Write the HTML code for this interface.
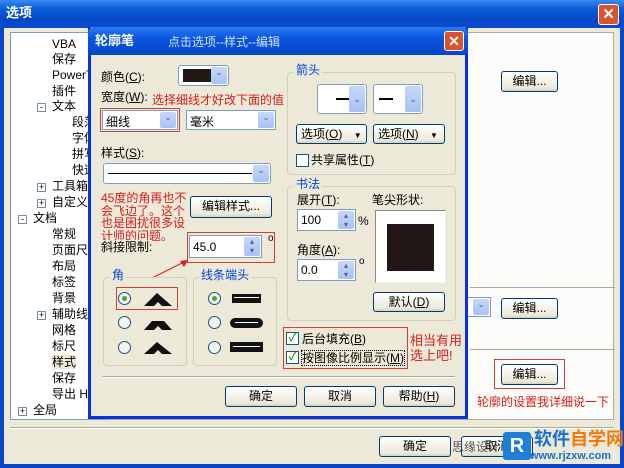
<!DOCTYPE html>
<html><head><meta charset="utf-8"><style>
*{margin:0;padding:0;box-sizing:border-box}
body{width:624px;height:468px;overflow:hidden;background:#ece9d8;font-family:"Liberation Sans","Noto Sans CJK SC",sans-serif;font-size:12px;color:#000;position:relative}
.a{position:absolute;white-space:nowrap;line-height:14px}
.btn{position:absolute;border:1px solid #003c74;border-radius:3px;background:linear-gradient(#fff,#ece9d8 85%,#d6d0c0);text-align:center;font-size:12px;line-height:18px}
.sel{position:absolute;background:#fff;border:1px solid #7f9db9;}
.dd{position:absolute;right:1px;top:1px;bottom:1px;width:16px;background:linear-gradient(#c6d7fb,#a9c2f5);border-radius:2px;color:#4d6185;font-size:9px;text-align:center}
.red{color:#d4201a}
.rb{position:absolute;border:1px solid #c8423b}
.grp{position:absolute;border:1px solid #d0d0bf;border-radius:4px}
.gt{position:absolute;background:#ece9d8;color:#0046d5;padding:0 2px;line-height:14px}
.rad{position:absolute;width:13px;height:13px;border-radius:50%;border:1px solid #1c5180;background:#f4f4ee}
.rad.on::after{content:"";position:absolute;left:3px;top:3px;width:5px;height:5px;border-radius:50%;background:#3fae3f}
.cb{position:absolute;width:13px;height:13px;border:1px solid #1c5180;background:#fff;color:#21a121;font-size:11px;line-height:11px;text-align:center;font-weight:bold}
.t{position:absolute;left:0;white-space:nowrap;line-height:14px}
.pl{position:absolute;width:9px;height:9px;border:1px solid #7a8aa0;background:#fff;font-size:9px;line-height:7px;text-align:center;color:#000}
</style></head><body>
<div class="a" style="left:0;top:0;width:624px;height:28px;background:linear-gradient(#3d8af7,#0a5fd8 30%,#0846c6 70%,#0a4bd0);"></div>
<div class="a" style="left:6px;top:6px;color:#fff;font-size:13px;font-weight:bold">选项</div>
<div class="a" style="left:598px;top:4px;width:21px;height:21px;border:1px solid #fff;border-radius:3px;background:#d9532c;color:#fff;text-align:center;font-size:15px;line-height:19px;font-weight:bold">✕</div>
<div class="a" style="left:0;top:28px;width:4px;height:440px;background:#0846c6"></div>
<div class="a" style="left:620px;top:28px;width:4px;height:440px;background:#0846c6"></div>
<div class="a" style="left:0;top:464px;width:624px;height:4px;background:#0846c6"></div>
<div class="a" style="left:10px;top:32px;width:96px;height:388px;background:#fff;border:1px solid #7f9db9"></div>
<div class="a" style="left:106px;top:32px;width:508px;height:388px;background:#fbfbf9;border:1px solid #aaa"></div>
<div class="a" style="left:10px;top:427px;width:604px;height:1px;background:#aca899"></div>
<div class="a" style="left:10px;top:428px;width:604px;height:1px;background:#fff"></div>
<div style="position:absolute;left:0;top:0;font-size:12px">
<div class="t" style="left:52px;top:37px">VBA</div>
<div class="t" style="left:52px;top:52px">保存</div>
<div class="t" style="left:52px;top:68px">PowerT</div>
<div class="t" style="left:52px;top:84px">插件</div>
<div class="pl" style="left:37px;top:103px">-</div><div class="t" style="left:52px;top:99px">文本</div>
<div class="t" style="left:72px;top:115px">段落</div>
<div class="t" style="left:72px;top:131px">字体</div>
<div class="t" style="left:72px;top:147px">拼写</div>
<div class="t" style="left:72px;top:163px">快速</div>
<div class="pl" style="left:37px;top:183px">+</div><div class="t" style="left:52px;top:179px">工具箱</div>
<div class="pl" style="left:37px;top:199px">+</div><div class="t" style="left:52px;top:195px">自定义</div>
<div class="pl" style="left:18px;top:215px">-</div><div class="t" style="left:33px;top:211px">文档</div>
<div class="t" style="left:52px;top:227px">常规</div>
<div class="t" style="left:52px;top:243px">页面尺</div>
<div class="t" style="left:52px;top:259px">布局</div>
<div class="t" style="left:52px;top:275px">标签</div>
<div class="t" style="left:52px;top:291px">背景</div>
<div class="pl" style="left:37px;top:311px">+</div><div class="t" style="left:52px;top:307px">辅助线</div>
<div class="t" style="left:52px;top:323px">网格</div>
<div class="t" style="left:52px;top:339px">标尺</div>
<div class="t" style="left:52px;top:355px;background:#ece9d8">样式</div>
<div class="t" style="left:52px;top:371px">保存</div>
<div class="t" style="left:52px;top:387px">导出 H</div>
<div class="pl" style="left:18px;top:407px">+</div><div class="t" style="left:33px;top:403px">全局</div>
</div>
<div class="btn" style="left:501px;top:71px;width:57px;height:21px">编辑...</div>
<div class="a" style="left:470px;top:287px;width:145px;height:1px;background:#aca899"></div>
<div class="sel" style="left:466px;top:297px;width:25px;height:20px"><div class="dd">⌄</div></div>
<div class="btn" style="left:501px;top:298px;width:57px;height:21px">编辑...</div>
<div class="a" style="left:470px;top:349px;width:145px;height:1px;background:#aca899"></div>
<div class="rb" style="left:494px;top:359px;width:71px;height:30px"></div>
<div class="btn" style="left:501px;top:364px;width:57px;height:21px">编辑...</div>
<div class="a red" style="left:477px;top:395px;font-size:12px">轮廓的设置我详细说一下</div>
<div class="btn" style="left:379px;top:436px;width:72px;height:21px">确定</div>
<div class="btn" style="left:461px;top:436px;width:72px;height:21px">取消</div>
<div class="a" style="left:452px;top:440px;color:#555">思缘设计</div>
<div class="a" style="left:503px;top:432px;width:28px;height:28px;background:#1f7fd8;border-radius:3px;color:#fff;font-weight:bold;font-size:20px;text-align:center;line-height:28px">R</div>
<div class="a" style="left:534px;top:430px;color:#1a6fd0;font-weight:bold;font-size:18px;line-height:19px">软件<span style="color:#f07a10">自学网</span></div>
<div class="a" style="left:530px;top:451px;color:#1a6fd0;font-weight:bold;font-size:11px;line-height:10px">www.rjzxw.com</div>
<div class="a" style="left:88px;top:27px;width:380px;height:392px;background:#ece9d8;border:3px solid #0831d9;border-top:0"></div>
<div class="a" style="left:88px;top:27px;width:380px;height:28px;background:linear-gradient(#2b7af0,#0a55e0 40%,#0846c6);border-radius:6px 6px 0 0"></div>
<div class="a" style="left:95px;top:34px;color:#fff;font-weight:bold;font-size:13px">轮廓笔</div>
<div class="a" style="left:168px;top:35px;color:#cfe3ff;font-size:12px">点击选项--样式--编辑</div>
<div class="a" style="left:444px;top:31px;width:20px;height:20px;border:1px solid #fff;border-radius:3px;background:#d9532c;color:#fff;text-align:center;font-size:14px;line-height:18px;font-weight:bold">✕</div>
<div class="a" style="left:101px;top:70px">颜色(<u>C</u>):</div>
<div class="sel" style="left:178px;top:65px;width:51px;height:21px;border-radius:3px"><div style="position:absolute;left:4px;top:3px;width:28px;height:13px;background:#231815"></div><div class="dd">⌄</div></div>
<div class="a" style="left:101px;top:90px">宽度(<u>W</u>):</div>
<div class="a red" style="left:152px;top:93px">选择细线才好改下面的值</div>
<div class="rb" style="left:100px;top:108px;width:80px;height:24px"></div>
<div class="sel" style="left:102px;top:110px;width:76px;height:20px"><span style="position:absolute;left:3px;top:2px">细线</span><div class="dd">⌄</div></div>
<div class="sel" style="left:186px;top:110px;width:90px;height:20px"><span style="position:absolute;left:3px;top:2px">毫米</span><div class="dd">⌄</div></div>
<div class="a" style="left:101px;top:146px">样式(<u>S</u>):</div>
<div class="sel" style="left:103px;top:163px;width:168px;height:21px;border-radius:3px"><div style="position:absolute;left:4px;top:9px;width:144px;height:1px;background:#000"></div><div class="dd">⌄</div></div>
<div class="a red" style="left:101px;top:192px;line-height:12.5px;font-size:12px">45度的角再也不<br>会飞边了。这个<br>也是困扰很多设<br>计师的问题。</div>
<div class="btn" style="left:190px;top:196px;width:82px;height:22px">编辑样式...</div>
<div class="a" style="left:101px;top:240px;background:#ece9d8">斜接限制:</div>
<div class="rb" style="left:187px;top:232px;width:88px;height:31px"></div>
<div class="sel" style="left:189px;top:235px;width:73px;height:23px"><span style="position:absolute;left:3px;top:4px">45.0</span><div class="dd" style="font-size:8px;line-height:9px">▴<br>▾</div></div>
<div class="a" style="left:268px;top:232px;font-size:10px">o</div>
<svg class="a" style="left:150px;top:258px" width="40" height="22"><line x1="2" y1="20" x2="36" y2="3" stroke="#d4201a"/><polygon points="38,2 30,3 34,9" fill="#d4201a"/></svg>
<div class="grp" style="left:103px;top:277px;width:84px;height:89px"></div>
<div class="gt" style="left:110px;top:268px">角</div>
<div class="grp" style="left:193px;top:277px;width:84px;height:89px"></div>
<div class="gt" style="left:199px;top:268px">线条端头</div>
<div class="rb" style="left:116px;top:287px;width:62px;height:23px"></div>
<div class="rad on" style="left:118px;top:292px"></div>
<div class="rad" style="left:118px;top:316px"></div>
<div class="rad" style="left:118px;top:341px"></div>
<svg class="a" style="left:142px;top:290px" width="32" height="70">
<polygon points="2,16 15,3 30,16 20,16 16,12 12,16" fill="#111"/>
<polygon points="2,40 10,31 22,31 30,40 20,40 16,36 12,40" fill="#111"/>
<polygon points="2,64 15,52 30,64 20,64 16,60 12,64" fill="#111"/>
</svg>
<div class="rad on" style="left:208px;top:292px"></div>
<div class="rad" style="left:208px;top:316px"></div>
<div class="rad" style="left:208px;top:341px"></div>
<div class="a" style="left:232px;top:294px;width:29px;height:9px;background:#111;"><div style="position:absolute;left:2px;top:3px;width:25px;height:1px;background:#fff"></div></div>
<div class="a" style="left:230px;top:318px;width:33px;height:10px;background:#111;border-radius:5px"><div style="position:absolute;left:5px;top:4px;width:23px;height:1px;background:#fff"></div></div>
<div class="a" style="left:230px;top:342px;width:33px;height:10px;background:#111;"><div style="position:absolute;left:3px;top:4px;width:27px;height:1px;background:#fff"></div></div>
<div class="grp" style="left:287px;top:72px;width:169px;height:103px"></div>
<div class="gt" style="left:294px;top:63px">箭头</div>
<div class="sel" style="left:317px;top:84px;width:50px;height:30px;border-radius:3px"><div style="position:absolute;left:18px;top:13px;width:14px;height:2px;background:#000"></div><div class="dd" style="line-height:26px">⌄</div></div>
<div class="sel" style="left:373px;top:84px;width:50px;height:30px;border-radius:3px"><div style="position:absolute;left:5px;top:13px;width:14px;height:2px;background:#000"></div><div class="dd" style="line-height:26px">⌄</div></div>
<div class="btn" style="left:296px;top:124px;width:71px;height:20px;text-align:left;padding-left:4px">选项(<u>O</u>) <span style="font-size:8px;margin-left:8px">▼</span></div>
<div class="btn" style="left:373px;top:124px;width:72px;height:20px;text-align:left;padding-left:4px">选项(<u>N</u>) <span style="font-size:8px;margin-left:8px">▼</span></div>
<div class="cb" style="left:296px;top:154px"></div>
<div class="a" style="left:311px;top:153px">共享属性(<u>T</u>)</div>
<div class="grp" style="left:287px;top:186px;width:169px;height:135px"></div>
<div class="gt" style="left:294px;top:177px">书法</div>
<div class="a" style="left:297px;top:193px">展开(<u>T</u>):</div>
<div class="sel" style="left:297px;top:209px;width:59px;height:22px"><span style="position:absolute;left:3px;top:3px">100</span><div class="dd" style="font-size:8px;line-height:9px">▴<br>▾</div></div>
<div class="a" style="left:358px;top:214px">%</div>
<div class="a" style="left:372px;top:193px">笔尖形状:</div>
<div class="a" style="left:375px;top:210px;width:71px;height:73px;background:#fff;border:1px solid #888;border-right-color:#eee;border-bottom-color:#eee"><div style="position:absolute;left:11px;top:13px;width:47px;height:47px;background:#231815"></div></div>
<div class="a" style="left:297px;top:243px">角度(<u>A</u>):</div>
<div class="sel" style="left:297px;top:259px;width:59px;height:22px"><span style="position:absolute;left:3px;top:3px">0.0</span><div class="dd" style="font-size:8px;line-height:9px">▴<br>▾</div></div>
<div class="a" style="left:359px;top:255px;font-size:10px">o</div>
<div class="btn" style="left:373px;top:292px;width:72px;height:20px">默认(<u>D</u>)</div>
<div class="rb" style="left:283px;top:327px;width:125px;height:42px"></div>
<div class="cb" style="left:286px;top:332px">✓</div>
<div class="a" style="left:302px;top:332px">后台填充(<u>B</u>)</div>
<div class="cb" style="left:286px;top:351px">✓</div>
<div class="a" style="left:302px;top:351px;outline:1px dotted #000">按图像比例显示(<u>M</u>)</div>
<div class="a red" style="left:410px;top:333px;line-height:15px;font-size:13px">相当有用<br>选上吧!</div>
<div class="a" style="left:103px;top:376px;width:352px;height:1px;background:#aca899"></div>
<div class="a" style="left:103px;top:377px;width:352px;height:1px;background:#fff"></div>
<div class="btn" style="left:225px;top:386px;width:72px;height:21px">确定</div>
<div class="btn" style="left:304px;top:386px;width:72px;height:21px">取消</div>
<div class="btn" style="left:383px;top:386px;width:72px;height:21px">帮助(<u>H</u>)</div>
</body></html>
